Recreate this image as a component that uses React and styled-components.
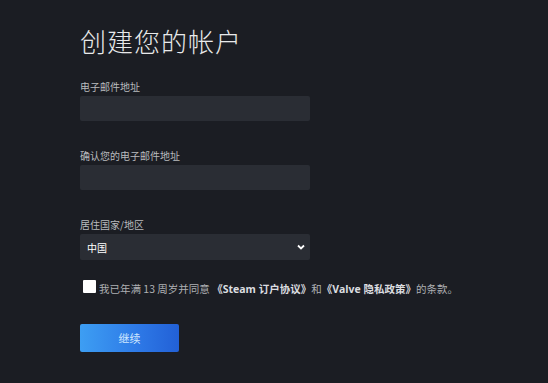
import React from "react";
import styled, { createGlobalStyle } from "styled-components";

const Global = createGlobalStyle`
  html, body { margin: 0; padding: 0; background: #1b1d23; }
  body { font-family: "Noto Sans CJK SC", "Noto Sans", Arial, sans-serif; }
  * { box-sizing: border-box; }
`;

const Page = styled.div`
  width: 548px;
  height: 383px;
  background: #1b1d23;
  padding: 23px 0 0 80px;
  overflow: hidden;
`;

const Title = styled.h1`
  margin: 0 0 21px 0;
  font-size: 26px;
  font-weight: 300;
  line-height: 36px;
  color: #e8e9ea;
  letter-spacing: 1px;
`;

const Field = styled.div`
  display: flex;
  flex-direction: column;
  gap: 2px;
  margin-bottom: ${(p) => p.$gap || 28}px;
`;

const Label = styled.label`
  font-size: 10px;
  line-height: 14px;
  color: #b9bbbe;
`;

const Input = styled.div`
  width: 230px;
  height: 25px;
  background: #2a2d34;
  border-radius: 2px;
`;

const Select = styled.div`
  width: 230px;
  height: 26px;
  background: #2a2d34;
  border-radius: 2px;
  display: flex;
  align-items: center;
  justify-content: space-between;
  padding: 0 4px 0 7px;
  color: #ffffff;
  font-size: 10px;
`;

const Agree = styled.div`
  display: flex;
  align-items: center;
  gap: 3px;
  margin: 0 0 27px 3px;
  font-size: 10.5px;
  line-height: 16px;
  color: #aeb0b3;
  white-space: nowrap;
`;

const Box = styled.span`
  width: 13px;
  height: 13px;
  background: #ffffff;
  border-radius: 1px;
  margin-top: -5px;
  flex: none;
`;

const Bold = styled.b`
  font-weight: 700;
  color: #dcdee0;
  font-family: "Open Sans", "Noto Sans CJK SC", sans-serif;
`;

const Button = styled.div`
  width: 99px;
  height: 28px;
  border-radius: 2px;
  background: linear-gradient(90deg, #3d9ef3 0%, #2d78e6 60%, #2260d6 100%);
  display: flex;
  align-items: center;
  justify-content: center;
  color: #cfe6ff;
  font-size: 11px;
`;

export default function App() {
  return (
    <>
      <Global />
      <Page>
        <Title>创建您的帐户</Title>
        <Field>
          <Label>电子邮件地址</Label>
          <Input />
        </Field>
        <Field>
          <Label>确认您的电子邮件地址</Label>
          <Input />
        </Field>
        <Field $gap={21}>
          <Label>居住国家/地区</Label>
          <Select>
            <span>中国</span>
            <svg width="10" height="10" viewBox="0 0 10 10">
              <path d="M2 3.5 L5 6.5 L8 3.5" fill="none" stroke="#fff" strokeWidth="1.8" />
            </svg>
          </Select>
        </Field>
        <Agree>
          <Box />
          <span>
            我已年满 13 周岁并同意 <Bold>《Steam 订户协议》</Bold>和<Bold>《Valve 隐私政策》</Bold>的条款。
          </span>
        </Agree>
        <Button>继续</Button>
      </Page>
    </>
  );
}
